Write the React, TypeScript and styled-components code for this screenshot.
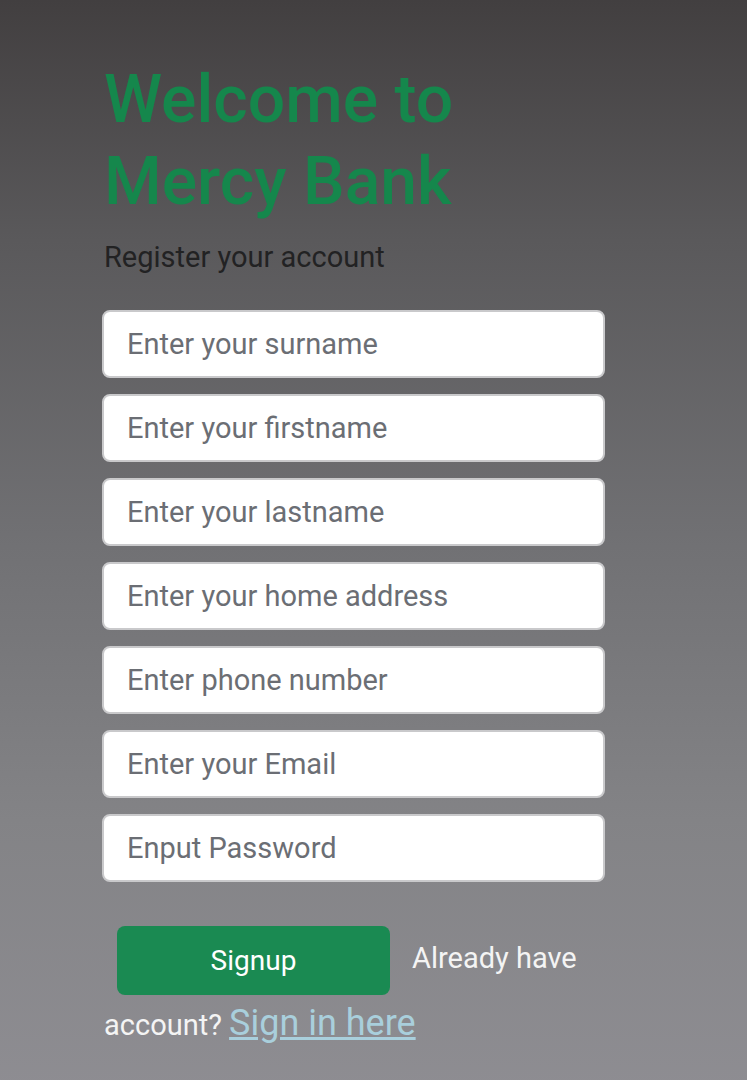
import React from "react"
import styled, {createGlobalStyle} from "styled-components"

const GlobalStyle = createGlobalStyle`
  html, body {
    margin: 0;
    padding: 0;
  }

  body {
    font-family: Roboto, "Noto Sans", sans-serif;
    background: linear-gradient(to bottom, #423f40 0%, #5a595b 22%, #717174 50%, #838386 75%, #8e8d92 100%);
    min-height: 1080px;
  }
`

const fields = [
    "Enter your surname",
    "Enter your firstname",
    "Enter your lastname",
    "Enter your home address",
    "Enter phone number",
    "Enter your Email",
    "Enput Password",
]

export default function App() {
    return (
        <>
            <GlobalStyle/>
            <Page>
                <Heading>Welcome to<br/>Mercy Bank</Heading>
                <SubTitle>Register your account</SubTitle>
                <Form onSubmit={e => e.preventDefault()}>
                    {fields.map(f => (
                        <Field key={f} placeholder={f} type={f.includes("Password") ? "password" : "text"}/>
                    ))}
                    <Footer>
                        <SignupButton type="submit">Signup</SignupButton>
                        Already have account? <SignInLink href="#">Sign in here</SignInLink>
                    </Footer>
                </Form>
            </Page>
        </>
    )
}

const Page = styled.div`
  padding: 59px 0 40px 102px;
  width: 505px;
`

const Heading = styled.h1`
  margin: 0 0 0 2px;
  font-size: 66px;
  line-height: 82px;
  font-weight: 500;
  color: #15874c;
`

const SubTitle = styled.p`
  margin: 14px 0 0 2px;
  font-size: 29px;
  line-height: 40px;
  color: #222223;
`

const Form = styled.form`
  display: flex;
  flex-direction: column;
  gap: 16px;
  margin-top: 33px;
`

const Field = styled.input`
  box-sizing: border-box;
  width: 503px;
  height: 68px;
  padding: 0 23px;
  border: 2px solid #c9c9cb;
  border-radius: 8px;
  background: #fff;
  font-family: Roboto, sans-serif;
  font-size: 29px;
  color: #333;
  outline: none;

  &::placeholder {
    color: #6b6e74;
  }
`

const Footer = styled.div`
  margin-top: 28px;
  padding-left: 2px;
  font-size: 29px;
  line-height: 56px;
  color: #f4f4f4;
`

const SignupButton = styled.button`
  display: inline-block;
  vertical-align: middle;
  width: 273px;
  height: 69px;
  margin: 0 22px 0 13px;
  border: none;
  border-radius: 8px;
  background: #1a8a52;
  color: #fff;
  font-family: Roboto, sans-serif;
  font-size: 28px;
`

const SignInLink = styled.a`
  font-size: 36px;
  color: #a9cfdc;
  text-decoration: underline;
`
